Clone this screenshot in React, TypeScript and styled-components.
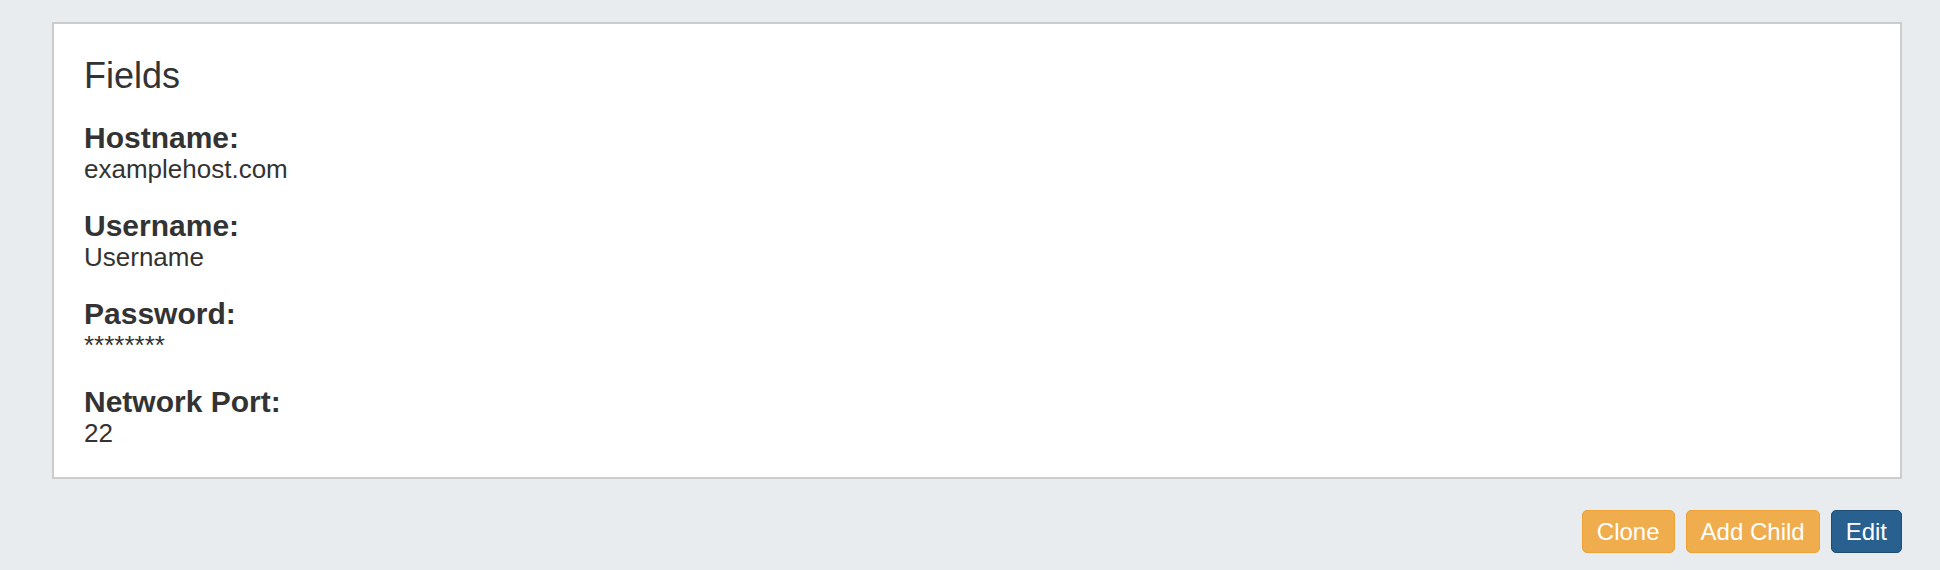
import React from "react";
import styled, { createGlobalStyle } from "styled-components";

const Global = createGlobalStyle`
  html, body {
    margin: 0;
    padding: 0;
    background: #e9ecef;
  }
  body {
    font-family: "Liberation Sans", Arial, Helvetica, sans-serif;
    color: #333333;
  }
`;

const Page = styled.div`
  padding: 22px 38px 17px 52px;
  display: flex;
  flex-direction: column;
`;

const Panel = styled.section`
  background: #ffffff;
  border: 2px solid #cccccc;
  padding: 32px 30px 29px 30px;
  display: flex;
  flex-direction: column;
  gap: 25px;
`;

const Heading = styled.h3`
  margin: 0;
  font-size: 36px;
  line-height: 40px;
  font-weight: 400;
  color: #333333;
`;

const Field = styled.div`
  display: flex;
  flex-direction: column;
`;

const Label = styled.div`
  font-size: 30px;
  line-height: 33px;
  font-weight: 700;
`;

const Value = styled.div`
  font-size: 26px;
  line-height: 30px;
`;

const Actions = styled.div`
  margin-top: 31px;
  display: flex;
  justify-content: flex-end;
  gap: 11px;
`;

const Button = styled.button<{ $variant: "warning" | "primary" }>`
  font-family: "Liberation Sans", Arial, Helvetica, sans-serif;
  font-size: 24px;
  line-height: 29px;
  padding: 6px 14px;
  border-radius: 5px;
  color: #ffffff;
  cursor: pointer;
  background: ${(p) => (p.$variant === "warning" ? "#f0ad4e" : "#286090")};
  border: 1px solid ${(p) => (p.$variant === "warning" ? "#eea236" : "#204d74")};
`;

const fields = [
  { label: "Hostname:", value: "examplehost.com" },
  { label: "Username:", value: "Username" },
  { label: "Password:", value: "********" },
  { label: "Network Port:", value: "22" },
];

export default function App() {
  return (
    <>
      <Global />
      <Page>
        <Panel>
          <Heading>Fields</Heading>
          {fields.map((f) => (
            <Field key={f.label}>
              <Label>{f.label}</Label>
              <Value>{f.value}</Value>
            </Field>
          ))}
        </Panel>
        <Actions>
          <Button $variant="warning">Clone</Button>
          <Button $variant="warning">Add Child</Button>
          <Button $variant="primary">Edit</Button>
        </Actions>
      </Page>
    </>
  );
}
